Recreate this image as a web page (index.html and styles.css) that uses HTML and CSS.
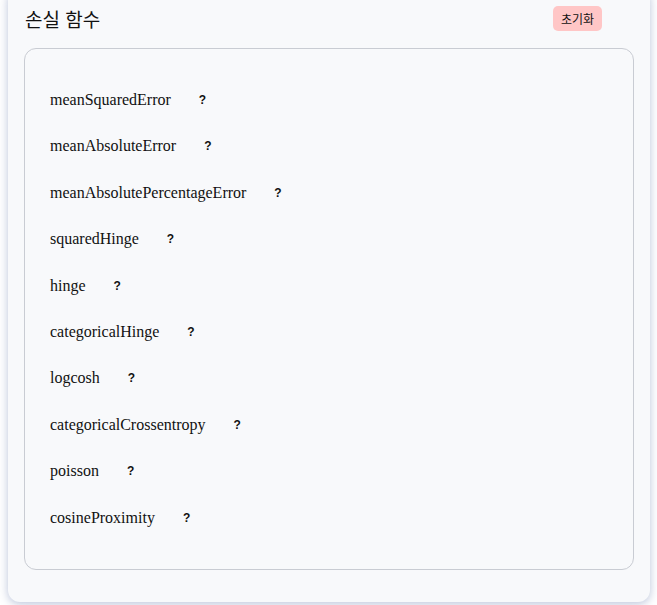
FILE: index.html
```html
<!DOCTYPE html>
<html lang="ko">
<head>
<meta charset="utf-8">
<link rel="stylesheet" href="styles.css">
</head>
<body>
<div class="card">
  <div class="header">
    <h2 class="title">손실 함수</h2>
    <button class="reset">초기화</button>
  </div>
  <div class="box">
    <div class="item"><span class="name">meanSquaredError</span><span class="help">?</span></div>
    <div class="item"><span class="name">meanAbsoluteError</span><span class="help">?</span></div>
    <div class="item"><span class="name">meanAbsolutePercentageError</span><span class="help">?</span></div>
    <div class="item"><span class="name">squaredHinge</span><span class="help">?</span></div>
    <div class="item"><span class="name">hinge</span><span class="help">?</span></div>
    <div class="item"><span class="name">categoricalHinge</span><span class="help">?</span></div>
    <div class="item"><span class="name">logcosh</span><span class="help">?</span></div>
    <div class="item"><span class="name">categoricalCrossentropy</span><span class="help">?</span></div>
    <div class="item"><span class="name">poisson</span><span class="help">?</span></div>
    <div class="item"><span class="name">cosineProximity</span><span class="help">?</span></div>
  </div>
</div>
</body>
</html>
```

FILE: styles.css
```css
html, body {
  margin: 0;
  background: #ffffff;
}
body {
  padding: 0 7px 0 8px;
  overflow: hidden;
  height: 605px;
}
.card {
  margin-top: -12px;
  padding: 12px 16px 32px;
  background: #f8f9fb;
  border-radius: 12px;
  box-shadow: 0 2px 10px rgba(60, 85, 150, 0.35);
}
.header {
  display: flex;
  align-items: center;
  justify-content: space-between;
  height: 36px;
  padding: 0 32px 0 1px;
  margin-bottom: 12px;
}
.title {
  margin: 0;
  font-family: "Noto Sans CJK KR", "Noto Sans", sans-serif;
  font-size: 19px;
  font-weight: 400;
  color: #111;
}
.reset {
  border: none;
  background: #ffc6c6;
  border-radius: 5px;
  font-family: "Noto Sans CJK KR", "Noto Sans", sans-serif;
  font-size: 12px;
  color: #111;
  padding: 4px 8px;
  line-height: 17px;
}
.box {
  border: 1px solid #c9ccd3;
  border-radius: 12px;
  padding: 40px 25px;
  display: flex;
  flex-direction: column;
  gap: 24px;
}
.item {
  font-family: "Liberation Serif", "Times New Roman", serif;
  font-size: 16px;
  line-height: 22.4px;
  color: #111;
  display: flex;
  align-items: center;
}
.help {
  margin-left: 28px;
  font-family: "Liberation Sans", Arial, sans-serif;
  font-weight: 700;
  font-size: 12px;
  color: #111;
}
```
